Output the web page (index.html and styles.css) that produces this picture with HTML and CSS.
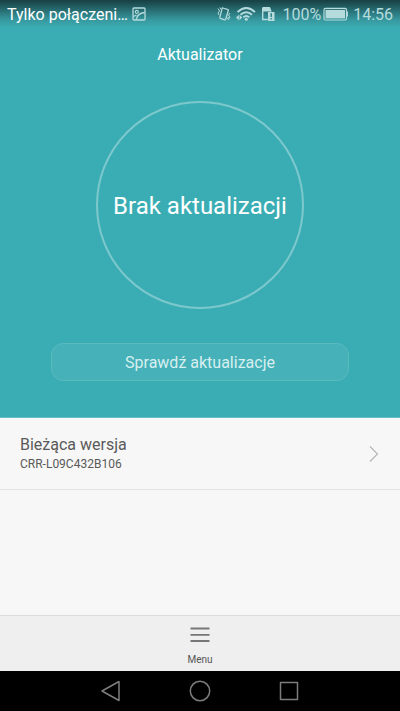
FILE: index.html
```html
<!DOCTYPE html>
<html lang="pl">
<head>
<meta charset="utf-8">
<meta name="viewport" content="width=device-width, initial-scale=1">
<title>Aktualizator</title>
<link rel="stylesheet" href="styles.css">
</head>
<body>
<div class="screen">
  <section class="hero">
    <div class="status">
      <span class="carrier">Tylko połączeni…</span>
      <svg class="shot" width="14" height="14" viewBox="0 0 14 14" fill="none" stroke="currentColor" aria-hidden="true">
        <rect x="1" y="1" width="12" height="12" rx="1" stroke-width="1.3"/>
        <circle cx="4.8" cy="4.8" r="1.5" stroke-width="1.2"/>
        <path d="M1.5 9.5l3-1.5M4.2 12.5C5 8.500 8 6 12.500 5.500" stroke-width="1.3"/>
      </svg>
      <div class="indicators">
        <svg width="14" height="16" viewBox="0 0 14 16" fill="none" stroke="currentColor" aria-hidden="true">
          <path d="M5.8 2L11 3.6Q11.600 3.900 11.300 4.500L8.700 13.200Q8.400 14 7.700 13.800L3.300 12.400Q2.600 12 2.800 11.400L5 2.800Q5.200 2 5.800 2z" stroke-width="1.3"/>
          <path d="M1 2.500l1.500 2.500L1 7l1 2M3 1.500l1 2M13 7l-1.500 2 1.500 2-2 3M11.500 11l-1 2"/>
        </svg>
        <svg width="20" height="16" viewBox="0 0 20 16" fill="none" stroke="currentColor" stroke-width="1.9" aria-hidden="true">
          <path d="M1.500 6Q10.300 -2 19 6M4.500 8.800Q10.300 3.500 16 8.800M7.300 11.400Q10.300 8.800 13.300 11.400"/>
          <circle cx="10.300" cy="13.300" r="1.500" fill="currentColor" stroke="none"/>
          <path d="M0 11.500L2.800 8.700v5.600zM6.200 11.500L3.500 8.700v5.600z" fill="currentColor" stroke="none"/>
        </svg>
        <svg class="sim" width="14" height="16" viewBox="0 0 14 16" aria-hidden="true">
          <path d="M1.700 3.500V13.500h5M1.700 2.700L2.700 1.700H8.500L10 5.500" fill="none" stroke="currentColor" stroke-width="1.400"/>
          <path d="M1 1.500h7.500l1.500 4H1z" fill="currentColor"/>
          <path fill-rule="evenodd" d="M7 6h6.500v9H7zM9.500 7.300v3.700h1.500V7.300zM9.500 12v1.500h1.500V12z" fill="currentColor"/>
        </svg>
        <span>100%</span>
        <svg class="battery" width="26" height="14" viewBox="0 0 26 14" aria-hidden="true">
          <rect x="1" y="1.300" width="22.500" height="11.700" rx="1.500" fill="none" stroke="currentColor" stroke-width="1.200"/>
          <rect x="2.500" y="2.900" width="19.500" height="8.500" fill="currentColor"/>
          <path d="M24 4.500h1v5h-1z" fill="currentColor"/>
        </svg>
        <time>14:56</time>
      </div>
    </div>
    <h1 class="title">Aktualizator</h1>
    <div class="ring">Brak aktualizacji</div>
    <button class="check" type="button">Sprawdź aktualizacje</button>
  </section>
  <a class="version" href="#wersja">
    <span class="version-text">
      <span class="version-name">Bieżąca wersja</span>
      <span class="version-code">CRR-L09C432B106</span>
    </span>
    <svg width="12" height="18" viewBox="0 0 12 18" fill="none" stroke="#b4b4b4" stroke-width="1.1" aria-hidden="true"><path d="M2 1.500L9.500 9 2 16.500"/></svg>
  </a>
  <div class="space"></div>
  <button class="menu" type="button">
    <svg width="20" height="16" viewBox="0 0 20 16" stroke="#777" stroke-width="1.800" aria-hidden="true"><path d="M.5 1.500h19M.5 7.800h19M.5 14h19"/></svg>
    <span>Menu</span>
  </button>
  <nav class="nav">
    <button type="button" aria-label="Wstecz"><svg width="22" height="22" viewBox="0 0 22 22" stroke-width="1.5"><path d="M2 11L19 1.500v19z"/></svg></button>
    <button type="button" aria-label="Ekran główny"><svg width="22" height="22" viewBox="0 0 22 22" stroke-width="1.5"><circle cx="11" cy="11" r="9.700"/></svg></button>
    <button type="button" aria-label="Ostatnie"><svg width="22" height="22" viewBox="0 0 22 22" stroke-width="1.5"><rect x="2.500" y="2.500" width="17" height="17"/></svg></button>
  </nav>
</div>
</body>
</html>
```
FILE: styles.css
```css
* { box-sizing: border-box; }
body {
  margin: 0;
  font-family: Roboto, "Noto Sans", sans-serif;
  background: #f7f7f7;
}
button {
  font: inherit;
  border: 0;
  padding: 0;
  background: none;
}
svg { display: block; flex: none; }
.screen {
  display: flex;
  flex-direction: column;
  min-height: 100vh;
}
.hero {
  display: flex;
  flex-direction: column;
  align-items: center;
  padding-bottom: 36px;
  border-bottom: 1px solid #66bfc4;
  color: #fff;
  background: linear-gradient(#173f43 0, #1f5659 5px, #2c7a80 13px, #36999f 20px, #3aadb4 28px);
}
.status {
  display: flex;
  align-items: center;
  align-self: stretch;
  height: 28px;
  padding: 0 7px;
  font-size: 16px;
}
.shot {
  margin-left: 4px;
  color: #b5dbdd;
}
.indicators {
  display: flex;
  align-items: center;
  gap: 5px;
  margin-left: auto;
  color: #b5dbdd;
}
.sim { margin-right: 2px; }
.battery { margin: 0 -1px 0 -3px; }
.title {
  margin: 16px 0 0;
  font-size: 16px;
  line-height: 22px;
  font-weight: 400;
}
.ring {
  display: flex;
  align-items: center;
  justify-content: center;
  width: 208px;
  height: 208px;
  margin-top: 35px;
  padding-top: 2px;
  border: 2px solid #7cc8cc;
  border-radius: 50%;
  font-size: 24px;
}
.check {
  width: 298px;
  max-width: 90%;
  height: 38px;
  margin-top: 34px;
  border: 1px solid #59babf;
  border-radius: 12px;
  background: #46b1b8;
  color: #d8eff0;
  font-size: 16px;
}
.version {
  display: flex;
  align-items: center;
  justify-content: space-between;
  height: 72px;
  padding: 0 20px;
  border-bottom: 1px solid #e3e3e3;
  color: #5a5a5a;
  text-decoration: none;
}
.version-text {
  display: flex;
  flex-direction: column;
}
.version-name {
  font-size: 16px;
  line-height: 20px;
}
.version-code {
  font-size: 12px;
  line-height: 18px;
}
.space { flex: 1; }
.menu {
  display: flex;
  flex-direction: column;
  align-items: center;
  gap: 10px;
  height: 56px;
  padding-top: 11px;
  border-top: 1px solid #dcdcdc;
  background: #efefef;
  color: #555;
  font-size: 10px;
  line-height: 14px;
}
.nav {
  display: grid;
  grid-template-columns: repeat(3, 1fr);
  height: 40px;
  padding: 0 16.6%;
  background: #000;
}
.nav button {
  display: grid;
  place-items: center;
}
.nav svg {
  fill: none;
  stroke: #7d7d7d;
  stroke-linejoin: round;
}
```
